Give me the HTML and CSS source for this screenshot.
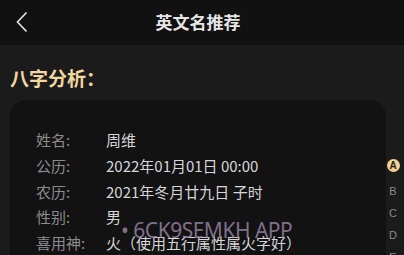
FILE: index.html
```html
<!DOCTYPE html>
<html lang="zh">
<head>
<meta charset="utf-8">
<link rel="stylesheet" href="styles.css">
</head>
<body>
<header class="topbar">
  <svg class="back" width="14" height="22" viewBox="0 0 14 22"><path d="M11.5 1.5 L2.5 11 L11.5 20.5" fill="none" stroke="#e8e8e8" stroke-width="1.6"/></svg>
  <div class="title">英文名推荐</div>
</header>
<main class="content">
  <h2 class="section">八字分析：</h2>
  <div class="card">
    <div class="row"><span class="lbl">姓名:</span><span class="val">周维</span></div>
    <div class="row"><span class="lbl">公历:</span><span class="val">2022年01月01日 00:00</span></div>
    <div class="row"><span class="lbl">农历:</span><span class="val">2021年冬月廿九日 子时</span></div>
    <div class="row"><span class="lbl">性别:</span><span class="val">男</span></div>
    <div class="row"><span class="lbl">喜用神:</span><span class="val">火（使用五行属性属火字好）</span></div>
  </div>
</main>
<div class="watermark">• 6CK9SEMKH APP</div>
<ul class="index">
  <li class="active">A</li>
  <li>B</li>
  <li>C</li>
  <li>D</li>
  <li>E</li>
</ul>
</body>
</html>
```
FILE: styles.css
```css
html, body {
  margin: 0;
  padding: 0;
  background: #1b1b1b;
  width: 404px;
  height: 255px;
  overflow: hidden;
  font-family: "Noto Sans CJK SC", "Noto Sans", sans-serif;
}
.topbar {
  position: relative;
  height: 45px;
  background: #111111;
  display: flex;
  align-items: center;
  justify-content: center;
}
.back {
  position: absolute;
  left: 15px;
  top: 11px;
}
.title {
  color: #e6e6e6;
  font-size: 17px;
  font-weight: 700;
  margin-top: -2px;
  margin-left: -8px;
}
.content {
  padding: 0 18px 0 10px;
}
.section {
  margin: 0;
  padding-top: 21px;
  box-sizing: border-box;
  color: #f3d7a0;
  font-size: 19px;
  font-weight: 700;
  line-height: 24px;
  height: 55px;
}
.card {
  background: #121212;
  border-radius: 16px;
  padding: 27px 0 0 26px;
  height: 200px;
  box-sizing: border-box;
}
.row {
  display: flex;
  height: 25.8px;
  line-height: 25.8px;
  font-size: 15px;
  white-space: nowrap;
}
.lbl {
  width: 70px;
  color: #8c8c8c;
}
.val {
  color: #d6d6d6;
}
.watermark {
  position: absolute;
  left: 121px;
  top: 216px;
  font-family: "Noto Sans", sans-serif;
  font-size: 21px;
  color: rgba(165, 145, 180, 0.75);
  letter-spacing: -0.5px;
}
.index {
  position: absolute;
  right: 4px;
  top: 158px;
  margin: 0;
  padding: 0;
  list-style: none;
  width: 14px;
}
.index li {
  height: 22px;
  display: flex;
  align-items: center;
  justify-content: center;
  font-family: "Liberation Sans", sans-serif;
  font-size: 11px;
  color: #8a8a8a;
}
.index li.active {
  width: 13px;
  height: 13px;
  margin: 1px auto 8px;
  border-radius: 50%;
  background: #f4d18e;
  color: #222;
  font-size: 10px;
  font-weight: 700;
}
```
